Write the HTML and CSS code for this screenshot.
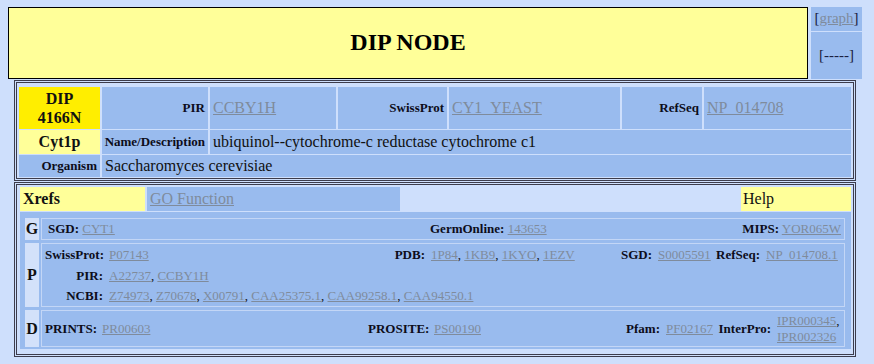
FILE: index.html
```html
<!DOCTYPE html>
<html>
<head>
<meta charset="utf-8">
<title>DIP NODE</title>
<link rel="stylesheet" href="styles.css">
</head>
<body>
<div class="top">
  <div class="title">DIP NODE</div>
  <div class="side">
    <div class="side-cell side-graph">[<a href="#">graph</a>]</div>
    <div class="side-cell side-dash">[-----]</div>
  </div>
</div>

<div class="panel info">
  <div class="info-grid">
    <div class="cell dip">DIP<br>4166N</div>
    <div class="cell lbl">PIR</div>
    <div class="cell val"><a href="#">CCBY1H</a></div>
    <div class="cell lbl">SwissProt</div>
    <div class="cell val"><a href="#">CY1_YEAST</a></div>
    <div class="cell lbl">RefSeq</div>
    <div class="cell val"><a href="#">NP_014708</a></div>

    <div class="cell name">Cyt1p</div>
    <div class="cell lbl">Name/Description</div>
    <div class="cell val span-rest">ubiquinol--cytochrome-c reductase cytochrome c1</div>

    <div class="cell lbl">Organism</div>
    <div class="cell val span-all">Saccharomyces cerevisiae</div>
  </div>
</div>

<div class="panel xrefs">
  <div class="tabs">
    <div class="tab tab-yellow"><b>Xrefs</b></div>
    <div class="tab tab-blue"><a href="#">GO Function</a></div>
    <div class="tab-spacer"></div>
    <div class="tab tab-yellow tab-help">Help</div>
  </div>
  <div class="xbox">
    <div class="letter">G</div>
    <div class="xcell g-grid">
      <div class="gi"><b>SGD:</b> <a href="#">CYT1</a></div>
      <div class="gi"><b>GermOnline:</b> <a href="#">143653</a></div>
      <div class="gi gi-right"><b>MIPS:</b> <a href="#">YOR065W</a></div>
    </div>

    <div class="letter">P</div>
    <div class="xcell p-grid">
      <div class="k">SwissProt:</div>
      <div class="v"><a href="#">P07143</a></div>
      <div class="k">PDB:</div>
      <div class="v"><a href="#">1P84</a>, <a href="#">1KB9</a>, <a href="#">1KYO</a>, <a href="#">1EZV</a></div>
      <div class="k">SGD:</div>
      <div class="v"><a href="#">S0005591</a></div>
      <div class="k">RefSeq:</div>
      <div class="v"><a href="#">NP_014708.1</a></div>

      <div class="k">PIR:</div>
      <div class="v v-wide"><a href="#">A22737</a>, <a href="#">CCBY1H</a></div>

      <div class="k">NCBI:</div>
      <div class="v v-wide"><a href="#">Z74973</a>, <a href="#">Z70678</a>, <a href="#">X00791</a>, <a href="#">CAA25375.1</a>, <a href="#">CAA99258.1</a>, <a href="#">CAA94550.1</a></div>
    </div>

    <div class="letter">D</div>
    <div class="xcell d-grid">
      <div class="k">PRINTS:</div>
      <div class="v"><a href="#">PR00603</a></div>
      <div class="k">PROSITE:</div>
      <div class="v"><a href="#">PS00190</a></div>
      <div class="k">Pfam:</div>
      <div class="v"><a href="#">PF02167</a></div>
      <div class="k">InterPro:</div>
      <div class="v"><a href="#">IPR000345</a>,<br><a href="#">IPR002326</a></div>
    </div>
  </div>
</div>
</body>
</html>
```

FILE: styles.css
```css
body {
  margin: 0;
  background: #cedffc;
  font-family: "Liberation Serif", "Times New Roman", serif;
  font-size: 16px;
  color: #111;
}

a {
  color: #7f8b9c;
  text-decoration: underline;
}

/* ---------- top header ---------- */
.top {
  display: flex;
  gap: 3px;
  padding: 7px 12px 0 8px;
}

.title {
  width: 800px;
  height: 72px;
  box-sizing: border-box;
  border: 1px solid #000;
  background: #ffff99;
  display: flex;
  align-items: center;
  justify-content: center;
  font-weight: bold;
  font-size: 24px;
  color: #000;
  padding-bottom: 1px;
}

.side {
  width: 51px;
  display: flex;
  flex-direction: column;
  gap: 1px;
}

.side-cell {
  background: #99bbee;
  display: flex;
  align-items: center;
  justify-content: center;
  font-size: 15px;
  color: #1a2040;
}

.side-graph {
  height: 24px;
  padding-bottom: 1px;
  box-sizing: border-box;
}

.side-dash {
  flex: 1;
}

/* ---------- panels ---------- */
.panel {
  margin: 1px 18px 0 14px;
  border: 3px double #3c3c4c;
}

.info {
  padding: 4px 2px 1px 2px;
}

.xrefs {
  margin-top: 1px;
  padding: 2px 2px 5px 3px;
}

/* ---------- info table ---------- */
.info-grid {
  display: grid;
  grid-template-columns: 81px 106px 126px 109px 171px 80px 1fr;
  grid-template-rows: 42px 24px 22px;
  gap: 1px 2px;
}

.cell {
  background: #99bbee;
  display: flex;
  align-items: center;
  padding: 0 3px;
  min-width: 0;
}

.dip {
  background: #ffee00;
  justify-content: center;
  text-align: center;
  font-weight: bold;
  line-height: 19px;
}

.name {
  background: #ffff99;
  justify-content: center;
  font-weight: bold;
}

.lbl {
  justify-content: flex-end;
  font-weight: bold;
  font-size: 13px;
  color: #0d0d1a;
}

.val {
  justify-content: flex-start;
}

.span-rest {
  grid-column: 3 / -1;
}

.span-all {
  grid-column: 2 / -1;
}

/* ---------- xrefs ---------- */
.tabs {
  display: grid;
  grid-template-columns: 125px 253px 1fr 110px;
  gap: 2px;
  height: 24px;
}

.tab {
  display: flex;
  align-items: center;
  padding: 0 3px;
}

.tab-yellow {
  background: #ffff99;
}

.tab-blue {
  background: #99bbee;
}

.tab-help {
  padding-left: 2px;
}

.xbox {
  margin-top: 1px;
  background: #99bbee;
  padding: 6px 6px 2px 5px;
  display: grid;
  grid-template-columns: 14px 1fr;
  grid-template-rows: 22px 64px 37px;
  gap: 3px 2px;
}

.letter {
  background: #d3e1fa;
  display: flex;
  align-items: center;
  justify-content: center;
  font-weight: bold;
  font-size: 16px;
}

.xcell {
  border: 1px solid #c3d6f6;
  font-size: 13px;
}

.xcell b,
.k {
  font-weight: bold;
  color: #0d0d1a;
}

.g-grid {
  display: grid;
  grid-template-columns: 385px 1fr auto;
  align-items: center;
}

.gi {
  padding: 0 3px;
}

.gi:first-child {
  padding-left: 6px;
}

.p-grid {
  display: grid;
  grid-template-columns: 64px 283px 39px 188px 39px 58px 50px 1fr;
  grid-template-rows: 21px 21px 1fr;
  align-items: center;
}

.d-grid {
  display: grid;
  grid-template-columns: 57px 266px 66px 189px 43px 52px 59px 1fr;
  align-items: center;
}

.k {
  text-align: right;
  padding: 0 3px;
  white-space: nowrap;
}

.v {
  text-align: left;
  padding: 0 3px;
  white-space: nowrap;
}

.v-wide {
  grid-column: 2 / -1;
}

.d-grid .k:first-child {
  text-align: left;
  padding-left: 3px;
}
```
